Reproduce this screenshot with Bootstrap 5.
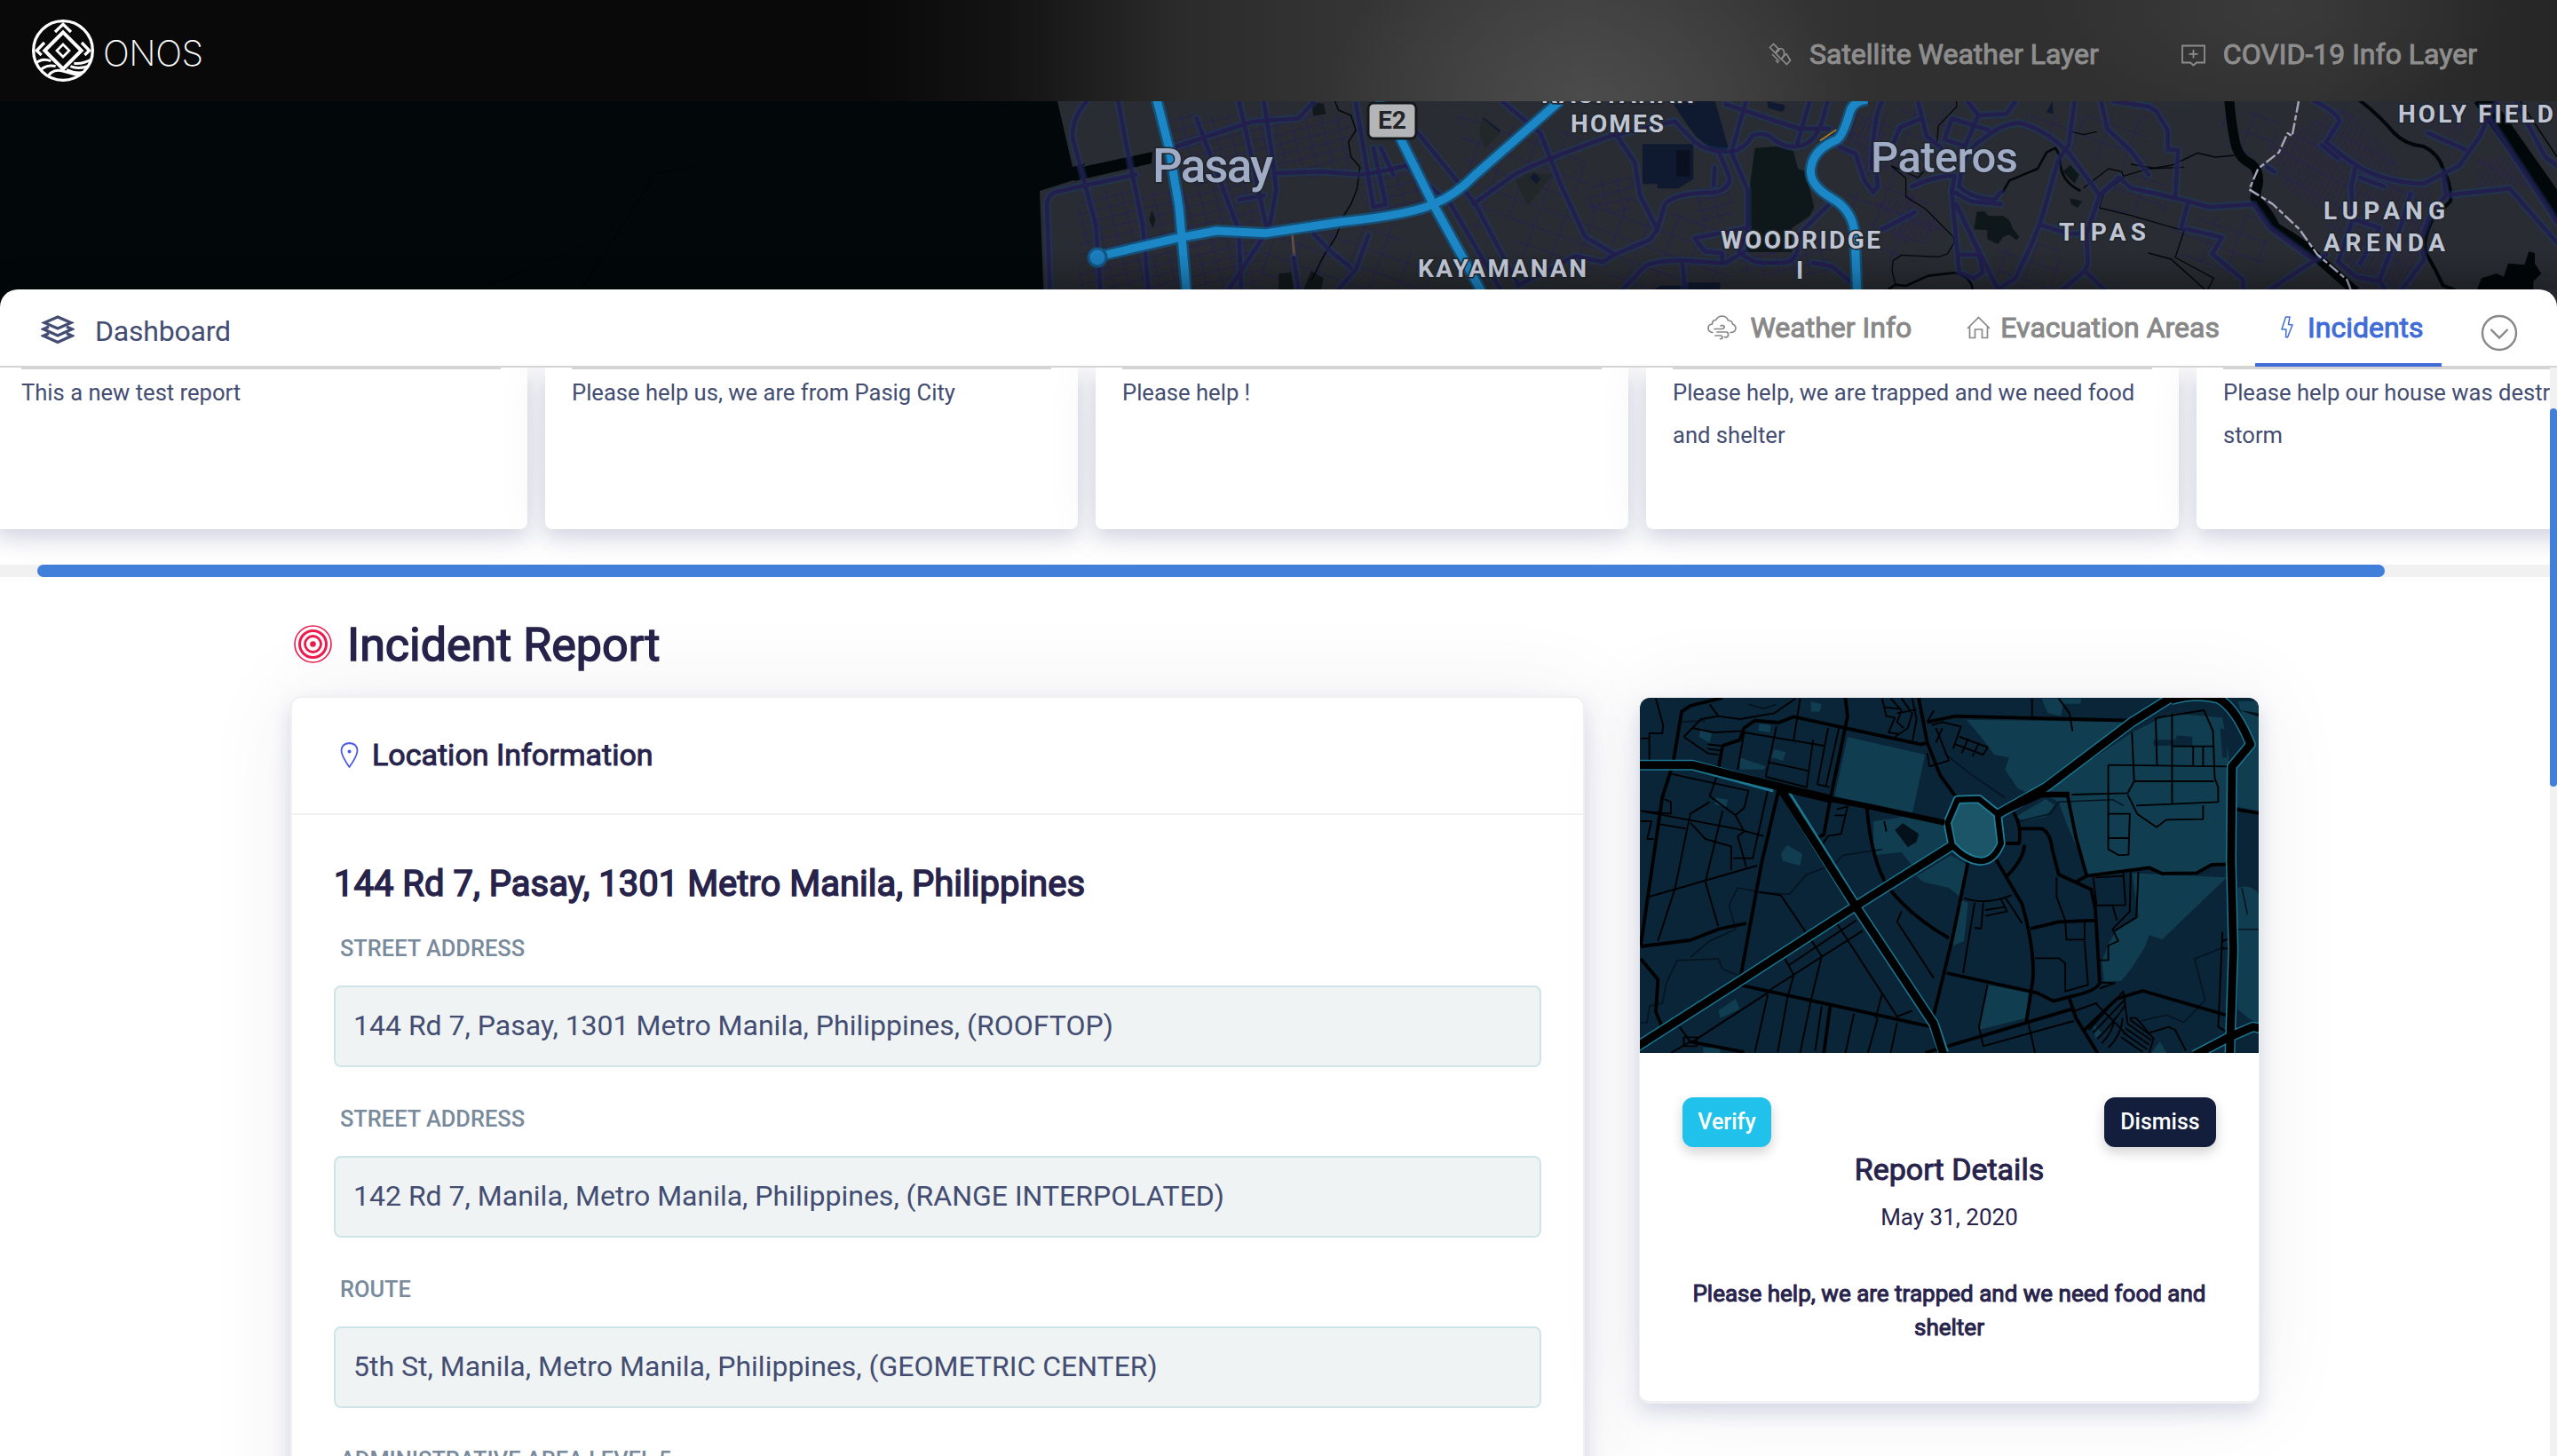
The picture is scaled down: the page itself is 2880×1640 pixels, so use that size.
<!DOCTYPE html>
<html lang="en">
<head>
<meta charset="utf-8">
<meta name="viewport" content="width=device-width, initial-scale=1">
<title>ONOS</title>
<link href="https://cdn.jsdelivr.net/npm/bootstrap@5.3.0/dist/css/bootstrap.min.css" rel="stylesheet">
<style>
  body{font-family:Roboto,"Liberation Sans",sans-serif;height:1640px;overflow:hidden;background:#fff;color:#434d72}
  .shell{height:1640px;overflow:hidden}
  .topbar{height:114px;padding:0 90px 0 36px;background:
    radial-gradient(ellipse 300px 190px at 1790px 114px,rgba(80,80,80,.75),rgba(80,80,80,0)),
    radial-gradient(ellipse 260px 130px at 2560px 10px,rgba(66,66,66,.6),rgba(66,66,66,0)),
    linear-gradient(90deg,#090909 0,#090909 970px,#141414 1140px,#2b2b2b 1330px,#363636 1560px,#3d3d3d 1780px,#303030 2120px,#303030 2600px,#262626 2880px)}
  .logo-word{font-family:Inter,"Liberation Sans",sans-serif;font-weight:200;color:#fff;font-size:39.500px;line-height:1;margin-left:10px;padding-top:7px;letter-spacing:-.4px}
  .faux{-webkit-text-stroke:1px currentColor}
  h1.faux,h3.faux{-webkit-text-stroke-width:1.500px}
  .toplink{color:#8d8d8d;font-size:32px;line-height:40px;padding:8px 0 0}
  .sat-ico{margin-top:7px}
  .covid-ico{margin:10px 0 0 93px}
  .maparea{height:232px;background:#02080a}
  .maparea svg,.reportmap svg{display:block}
  .art path{vector-effect:non-scaling-stroke;stroke-linejoin:round}
  .lbl{font-family:Roboto,sans-serif;font-weight:700;fill:#bfc4d3;font-size:28px;paint-order:stroke;stroke:#20242c;stroke-width:3px}
  .lbl-city{fill:#a0acc6;font-weight:500}
  .panel{height:1314px;margin-top:-20px;border-radius:20px 20px 0 0;background:#fff;box-shadow:0 0 36px rgba(0,0,0,.3);overflow:hidden}
  .tabbar{height:88px;border-bottom:2px solid #d4d4d4;padding:0 44px 0 46px}
  .tabtxt{font-size:32px;line-height:40px;color:#888}
  .dash-txt{margin:7px 0 0 23px;color:#434d72;letter-spacing:-.2px}
  .tabitem{height:88px}
  .tabitem.on{border-bottom:4px solid #416cd8;width:210px;padding-top:3px}
  .tabitem.on .tabtxt{color:#416cd8}
  .strip{height:222px;width:2872px;overflow:hidden;gap:20px;background:#fff}
  .strip-card{width:600px;height:182px;flex:none;background:#fff;border-radius:0 0 8px 8px;padding:0 30px;
    box-shadow:0 10px 22px rgba(50,60,130,.18),0 0 60px rgba(50,50,93,.08)}
  .strip-card:first-child{margin-left:-6px}
  .strip-card hr{margin:0;border:0;height:2px;opacity:1;background:#d4d4d4}
  .strip-card p{margin:0;padding-top:2px;font-size:25.600px;line-height:48px;color:#434d72}
  .htrack{height:14px;width:2872px;background:#f1f1f1;padding-left:42px}
  .hthumb{width:2644px;height:14px;border-radius:8px;background:#427fdb}
  .vtrack{position:absolute;right:0;top:414px;width:8px;height:1226px;background:#f1f1f1;padding-top:46px}
  .vthumb{height:426px;border-radius:4px;background:#427fdb}
  .content{padding:0 0 0 327px}
  .navy{color:#27234b}
  .pagehead{height:136px;padding-top:18px;padding-left:4px}
  .pagehead svg{margin-top:-4px}
  .pagehead h1{font-size:52px;line-height:60px;margin:0 0 0 17px;font-weight:400}
  .soft{border:2px solid #f1f1f3;border-radius:12px;background:#fff;box-shadow:0 10px 22px rgba(50,60,130,.17),0 0 100px rgba(50,50,93,.08)}
  .loc{width:1458px;height:1000px;margin-top:-2px}
  .loc-head{height:132px;border-bottom:2px solid #f2f2f2;padding:0 0 2px 54px}
  .loc-head h2{font-size:34px;margin:0 0 0 15px;font-weight:400;line-height:40px}
  .loc-body{padding:53px 47px 0 47px}
  .loc-body h3{font-size:40px;line-height:50px;margin:0 0 32px;font-weight:400}
  .fieldlab{font-size:25.400px;font-weight:500;line-height:30px;color:#788a9c;padding-left:7px;margin-bottom:27px;display:block}
  .fieldbox{height:92px;border:2px solid #cfe4e8;border-radius:8px;background:#eff3f4;color:#434d72;font-size:32px;padding:0 0 3px 20px;margin-bottom:43px}
  .rep{width:699px;height:795px;margin-left:61px;border-width:0 1px 3px;overflow:hidden}
  .reportmap{height:400px}
  .rep-body{padding:50px 48px 0}
  .pill{height:56px;border:0;border-radius:12px;color:#fff;font-size:25px;font-weight:500;padding:0;box-shadow:0 6px 14px rgba(0,0,0,.18)}
  .pill-v{width:100px;background:#20c1eb}.pill-d{width:126px;background:#131e3c}
  .rep h4{font-size:34px;line-height:40px;margin:5px 0 0;font-weight:400}
  .date{font-size:26px;line-height:40px;margin-top:14px}
  .msg{font-size:26px;line-height:38px;margin-top:47px}
</style>
</head>
<body>
<div class="shell position-relative">
  <header class="topbar d-flex align-items-center justify-content-between">
    <div class="d-flex align-items-center">
      <svg width="70" height="70" viewBox="108 2 210 210" fill="none" stroke="#fff">
        <clipPath id="disc"><circle cx="213" cy="107" r="98"/></clipPath>
        <circle cx="213" cy="107" r="100" stroke-width="10"/>
        <g clip-path="url(#disc)" stroke-width="9">
          <path d="M112 160Q135 128 172 142M125 186Q150 150 188 160M155 205Q175 165 212 176L262 190Q285 195 296 188M238 160Q265 172 305 158M225 172Q262 190 305 175M250 150Q280 154 312 135"/>
          <path d="M186 44L213 18L240 44" stroke-width="10"/><path d="M150 80L124 107L140 122M276 80L302 107L286 122" stroke-width="10"/>
        </g>
        <path d="M213 45L275 107L213 169L151 107Z" fill="#090909" stroke-width="12"/>
        <path d="M213 86L234 107L213 128L192 107Z" stroke-width="8"/>
      </svg>
      <span class="logo-word">ONOS</span>
    </div>
    <nav class="d-flex align-items-center">
      <svg class="sat-ico" width="26" height="26" viewBox="0 0 26 26" fill="none" stroke="#8d8d8d" stroke-width="1.600"><path d="M1.500 5.500L5.500 1.500L12 8L8 12Z M17 15.500L20 12.500L24.500 20L20.500 24.500L14.500 18.500Z"/><path d="M8 12Q9 7 14 6.500Q19 8 17 15L14 18.500L8 12M4 13L12 21M8 20L11 23"/></svg>
      <span class="toplink faux ms-3 ps-1">Satellite Weather Layer</span>
      <svg class="covid-ico" width="27" height="25" viewBox="0 0 27 25" fill="none" stroke="#8d8d8d" stroke-width="1.800"><path d="M1 1.500H26V20.500H17L13.500 23.500L10 20.500H1Z M13.500 6V15.500M8.500 10.800H18.500"/></svg>
      <span class="toplink faux ms-3 ps-1">COVID-19 Info Layer</span>
    </nav>
  </header>

  <div class="maparea">
    <svg class="art" width="2880" height="232" viewBox="0 114 2880 232">
      <defs>
        <pattern id="blk" width="17" height="11" patternUnits="userSpaceOnUse" patternTransform="rotate(-14)"><path d="M0 .5H17M.5 0V11" stroke="#26204f" stroke-width="1" fill="none"/></pattern>
        <pattern id="fine" width="6" height="24" patternUnits="userSpaceOnUse" patternTransform="rotate(28)"><path d="M0 .5H6M.5 0V24" stroke="#27214f" stroke-width="1" fill="none"/></pattern>
        <pattern id="wide" width="30" height="22" patternUnits="userSpaceOnUse" patternTransform="rotate(20)"><path d="M0 .5H30M.5 0V22" stroke="#26204f" stroke-width="1" fill="none"/></pattern>
        <linearGradient id="floor" x1="0" y1="0" x2="0" y2="1"><stop offset="0" stop-color="#000" stop-opacity="0"/><stop offset="1" stop-color="#000" stop-opacity=".15"/></linearGradient>
        <g id="roads" fill="none" stroke-linecap="round">
          <g transform="translate(1140 0) scale(.5612 .33333)">
            <path d="M150 342Q118 400 122 470L168 760L178 1000M213 342L228 480L262 760L275 1000M455 342L470 450L512 780L430 990M505 342L520 500L530 640L515 780M605 345L575 400L480 412L330 495M248 590L150 625L85 650Q68 665 70 700L76 1000M370 400L455 780L460 1000M455 675L505 660M530 585L620 580L700 590Q780 570 815 545"/>
            <path d="M690 350L715 600L725 700L750 690L725 500M740 500L765 590M815 450L930 690L1015 960M790 560L880 690L980 978M925 690L1000 600Q1020 570 1200 460L1330 410M985 345L1060 450L1100 620L1150 800L1210 860L1185 885L1130 865L1015 965M1210 450L1250 550L1260 660L1295 775L1280 810L1210 860M1295 775L1310 690Q1330 650 1410 650Q1440 640 1440 600L1420 520"/>
            <path d="M1330 410L1370 480Q1400 520 1450 510M1225 978L1270 900Q1290 880 1350 880L1430 890L1470 850M1345 880L1350 978M1370 805L1475 770M1370 805L1390 850L1425 855V890M715 795L690 910L655 978M605 790L640 850L680 905M565 870L575 978M1410 565L1408 625"/>
          </g>
          <g transform="translate(1900 30) scale(.33333)">
            <path d="M130 262L380 345H480M200 252L150 425L205 550V690L175 760Q220 800 260 798H330Q380 790 375 720L390 690L480 600M415 252L370 405M150 425Q200 410 220 370Q250 355 280 370Q320 410 370 405Q440 400 465 290L475 255M660 252Q630 300 625 480M515 405L570 430L600 520L630 560L645 540L640 490M780 252L795 310L720 340L695 400M795 310L810 370L860 410M950 255L985 300L1080 295L1110 252M895 310L1020 350M895 310L870 380L940 405L985 300M760 540Q850 500 905 505L895 555L960 590L1060 600"/>
            <path d="M920 540Q930 420 1000 380Q1060 330 1120 325Q1200 340 1285 420L1395 570M895 555L920 830L970 850L1000 830L985 760L910 600L1050 888M1310 252L1290 400L1255 450L1195 660L1160 745L1110 850L1050 888M1195 670L1290 700H1350M920 770H985M1395 570L1350 700L1355 800L1345 825L1270 888M1345 825L1410 888M1400 252L1420 345L1500 420L1560 500M1395 570L1460 510L1500 545L1560 560M1440 252L1560 270M660 685L770 628M425 798L490 810L550 860M920 540Q960 580 1040 585L1060 560"/>
          </g>
          <g transform="translate(2420 30) scale(.33333)">
            <path d="M0 270L25 285L65 350V415L100 418L90 580M0 558L135 590L205 610L355 600L410 680L560 790M135 590L110 680L248 712L215 768L320 855V888M410 888L570 785L600 770M560 252Q640 290 645 320L600 390L660 440L720 480Q820 530 930 530L1050 470L1120 370L1150 300L1180 252M945 360L1070 415M585 400L640 445M700 470L685 540L690 650L640 795L700 845L780 860L800 888M715 510L795 540M885 565L850 680L780 855M995 490L1005 570L1220 547L1345 690L1380 730M1005 570L950 640L920 720L930 790L855 888M400 475L425 490M690 650L780 680L715 800M1145 300L1380 660M1240 252L1340 440L1380 470"/>
          </g>
        </g>
        <g id="hiways" fill="none">
          <path transform="translate(1140 0) scale(.5612 .33333)" d="M290 335L315 500L335 700L350 985M170 868L330 805L410 780L510 788L660 750Q800 725 845 690Q890 660 930 590L1100 340M735 335L780 470L845 690L942 985"/>
          <path transform="translate(1900 30) scale(.33333)" d="M610 246Q560 252 550 290Q525 380 500 385Q420 420 418 490Q420 540 490 580Q560 620 567 700L575 896"/>
        </g>
      </defs>
      <path d="M1191 114H2880V346H1176L1171 215L1212 202L1222 184L1208 188Z" fill="#292d33"/>
      <path d="M1210 190L1298 171L1297 184L1210 204Z" fill="#02080a"/>
      <path d="M540 326L658 276L738 196L780 188M738 196L655 326" fill="none" stroke="#020303" stroke-width="1"/>
      <path d="M1215 215H1420V326H1215ZM1310 130H1520V200H1310ZM1330 200H1420V250Z" fill="url(#blk)"/>
      <path d="M1420 250L1560 240L1620 326H1420ZM1640 130L1780 150L1790 210L1660 260ZM1700 240L1860 220L1850 300L1710 310ZM1850 240H1950V326H1800Z" fill="url(#wide)"/>
      <path d="M1530 200L1600 190L1620 240L1540 250ZM1790 200H1840V240H1790ZM1960 260H2060V310H1960ZM1910 210L1950 200V250H1910Z" fill="url(#blk)"/>
      <path d="M2060 130L2200 120L2210 190L2150 215L2070 170ZM2060 230L2150 190L2195 260L2120 300L2100 240ZM2240 130H2420V200L2330 170ZM2250 280L2320 270V326H2250ZM2380 200L2440 190V240H2380Z" fill="url(#wide)"/>
      <path d="M2440 250L2540 240L2560 290L2520 310L2460 290ZM2500 130L2570 120L2560 170L2510 180Z" fill="url(#wide)"/>
      <path d="M2560 160L2640 120L2700 180L2700 230L2620 240L2570 210ZM2640 180L2740 210L2720 326H2660L2620 250ZM2700 120H2780L2770 160ZM2790 180L2850 170V210H2790Z" fill="url(#fine)"/>
      <path d="M2080 150L2110 126L2140 180L2100 200ZM2110 230L2150 218L2190 256L2140 276Z" fill="url(#fine)"/>
      <g transform="translate(1140 0) scale(.5612 .33333)">
        <path d="M1265 487H1367V605L1337 637H1295V622H1265Z" fill="#0f1930"/><path d="M1333 508H1360V596H1333Z" fill="#0a1020"/>
        <path d="M1515 345L1550 355L1545 378L1518 365ZM945 395L980 440L975 455L940 430ZM1300 965H1420V978H1290Z" fill="#0f1930"/>
        <path d="M600 345L625 350L630 385L605 392ZM535 925L560 920L565 978H535ZM600 915L625 940L620 978H585ZM280 710L288 740L283 770L275 745Z" fill="#12181c"/>
        <path d="M945 400Q930 440 950 500L980 450ZM1010 610L1040 585L1085 590L1035 695Z" fill="#22272a"/>
        <path d="M1040 600L1048 582L1060 605L1052 622Z" fill="#0f1930"/>
        <path d="M648 342L655 372L680 390L690 440L675 480L680 530L698 565L692 640L680 690L665 730L650 800L625 865L600 950" fill="none" stroke="#05080a" stroke-width="1.500"/>
        <path d="M563 790L568 868M561 790L565 868" fill="none" stroke="#7a5a4c" stroke-width="1"/>
      </g>
      <g transform="translate(1900 30) scale(.33333)">
        <path d="M230 410L305 405L360 420L375 480L400 488L430 610L415 640L355 680V762H200L210 560ZM980 625L1005 625L1020 640H1070L1090 655L1100 680L1123 710L1113 722L1090 703L1070 710L1050 735L1015 718V688L970 685ZM1270 490L1295 468L1325 500L1310 530ZM1295 580L1335 590L1320 612L1298 600Z" fill="#0e1719"/>
        <path d="M-60 240L95 252L140 410L100 430L30 370L0 330ZM275 252L332 268L328 284L275 268ZM1215 290L1235 252L1238 295ZM0 865H112V888H0Z" fill="#0f1930"/>
        <path d="M910 252L912 270L850 335L845 390M690 470L740 512V575L805 615L900 710L903 730L880 768L850 778L725 772L697 790L693 825L705 872M690 470L780 510L800 490M1340 545L1425 480L1470 490L1475 510L1410 560L1393 612L1500 638L1680 690L1650 780L1780 850L1760 888M1300 355L1340 365L1385 355M1475 505L1560 480L1680 475" fill="none" stroke="#05080a" stroke-width="1.300"/>
        <path d="M680 888L705 872L740 876L815 842L905 832Q960 845 965 888M1065 562L1090 520L1185 480L1215 425L1245 410L1262 440Q1255 520 1330 555" fill="none" stroke="#04080a" stroke-width="2.600"/>
      </g>
      <g transform="translate(2420 30) scale(.33333)" fill="none" stroke="#02070a">
        <path d="M272 246Q280 330 290 380Q300 440 340 460Q375 480 370 530L360 580Q400 620 430 680Q520 730 570 780L700 896" stroke-width="11"/>
        <path d="M712 248Q780 300 830 360Q870 400 930 405Q980 430 995 480Q1025 540 1020 590L960 650Q920 730 940 770Q970 820 995 875L1035 890" stroke-width="4"/>
        <path d="M1125 240L1420 660" stroke-width="20"/>
        <path d="M1255 252L1380 440M-60 465L20 478L80 468L165 427L225 441L290 435M0 765L75 785L190 888" stroke-width="1.500"/>
        <path d="M1110 888L1125 850L1175 835L1200 845L1215 800L1270 805L1285 760L1305 765V800L1327 835L1300 860V888Z" fill="#02070a" stroke="none"/>
      </g>
      <use href="#roads" stroke="#16407c" stroke-opacity=".34" stroke-width="9"/>
      <use href="#roads" stroke="#231d4e" stroke-opacity=".9" stroke-width="4.500"/>
      <path transform="translate(2420 30) scale(.33333)" d="M507 252L485 370L470 360L440 425L370 480L340 550L420 600L510 685L570 770L670 855L683 888" fill="none" stroke="#aaa5bd" stroke-width="2.400" stroke-dasharray="13 3 6 3"/>
      <path transform="translate(1900 30) scale(.33333)" d="M505 348L450 385" fill="none" stroke="#d08a2a" stroke-width="1.500"/>
      <use href="#hiways" stroke="#135682" stroke-width="14" stroke-opacity=".8"/>
      <use href="#hiways" stroke="#1c87c6" stroke-width="9"/>
      <circle cx="1236" cy="290" r="10" fill="#1c7fc0" stroke="#135682" stroke-width="3"/>
      <rect y="280" width="2880" height="46" fill="url(#floor)"/>
      <rect x="1541" y="116" width="54" height="40" rx="6" fill="#b4b5b7" stroke="#17181c" stroke-width="3"/>
      <text class="lbl" x="1552" y="145" style="fill:#222428;stroke:none;font-size:28px" textLength="32" lengthAdjust="spacingAndGlyphs">E2</text>
      <text class="lbl lbl-city" x="1298" y="205" style="font-size:53px" textLength="136">Pasay</text>
      <text class="lbl lbl-city" x="2107" y="194" style="font-size:49px" textLength="166">Pateros</text>
      <text class="lbl" x="1736" y="116" textLength="172">KASIYAHAN</text>
      <text class="lbl" x="1769" y="149" textLength="105">HOMES</text>
      <text class="lbl" x="1597" y="312" textLength="190">KAYAMANAN</text>
      <text class="lbl" x="1938" y="280" textLength="180">WOODRIDGE</text>
      <text class="lbl" x="2023" y="314">I</text>
      <text class="lbl" x="2319" y="271" textLength="98">TIPAS</text>
      <text class="lbl" x="2701" y="138" textLength="175">HOLY FIELD</text>
      <text class="lbl" x="2617" y="247" textLength="137">LUPANG</text>
      <text class="lbl" x="2617" y="283" textLength="137">ARENDA</text>
    </svg>
  </div>

  <section class="panel position-relative">
    <div class="tabbar d-flex align-items-center justify-content-between">
      <div class="d-flex align-items-center">
        <svg class="mt-1" width="38" height="34" viewBox="0 0 38 34" fill="none" stroke="#434d72" stroke-width="3.400" stroke-linejoin="miter"><path d="M19 3L34 9.500L19 16L4 9.500Z"/><path d="M9 14L3 16.800L19 24L35 16.800L29 14M9 21.500L3 24.300L19 31.500L35 24.300L29 21.500"/></svg>
        <span class="tabtxt dash-txt">Dashboard</span>
      </div>
      <div class="d-flex align-items-center">
        <div class="tabitem d-flex align-items-center">
          <svg width="33" height="28" viewBox="0 0 33 28" fill="none" stroke="#888" stroke-width="1.700" stroke-linecap="round"><path d="M6 19.500Q1 19 1 14.500Q1 10.500 5.500 10Q5.500 5.500 9.500 5.500Q12 1 17 1Q22 1.500 23.500 6Q28 6 28.500 10Q32 11.500 32 15Q31.500 19.500 26 19.500"/><path d="M8 15.500H17Q19.500 15 19 12.500Q17.500 10.500 15 12M11 19H22Q24 20 23.500 23Q22 26 19.500 24.500M9 23H15Q17.500 23.500 17 26Q16 27 14.500 26.500"/></svg>
          <span class="tabtxt faux" style="margin-left:15px">Weather Info</span>
        </div>
        <div class="tabitem d-flex align-items-center" style="margin-left:62px">
          <svg width="27" height="26" viewBox="0 0 27 26" fill="none" stroke="#888" stroke-width="1.700"><path d="M1 14L13.500 1.500L26 14M3.500 12V24.500H9.500V15H17.500V24.500H23.500V12"/></svg>
          <span class="tabtxt faux" style="margin-left:11px">Evacuation Areas</span>
        </div>
        <div class="tabitem on d-flex align-items-center" style="margin-left:40px;padding-left:29px">
          <svg width="14" height="25" viewBox="0 0 14 25" fill="none" stroke="#416cd8" stroke-width="1.500" stroke-linejoin="round"><path d="M5.500 1H10L8.500 9.500L13 10L7.500 24L5.500 23.500L6 15H1Z"/></svg>
          <span class="tabtxt faux" style="margin-left:16px">Incidents</span>
        </div>
        <svg style="margin:11px 0 0 44px" width="42" height="42" viewBox="0 0 42 42" fill="none" stroke="#888" stroke-width="2.400"><circle cx="21" cy="21" r="19"/><path d="M11.500 17L21 26.500L30.500 17"/></svg>
      </div>
    </div>

    <div class="strip d-flex">
      <div class="strip-card"><hr><p>This a new test report</p></div>
      <div class="strip-card"><hr><p>Please help us, we are from Pasig City</p></div>
      <div class="strip-card"><hr><p>Please help !</p></div>
      <div class="strip-card"><hr><p>Please help, we are trapped and we need food and shelter</p></div>
      <div class="strip-card"><hr><p>Please help our house was destroyed by the storm</p></div>
    </div>
    <div class="htrack"><div class="hthumb"></div></div>

    <main class="content">
      <div class="pagehead d-flex align-items-center">
        <svg width="43" height="43" viewBox="0 0 43 43" fill="none" stroke="#ee1c4e"><circle cx="21.500" cy="21.500" r="20.500" stroke-width="1.600"/><circle cx="21.500" cy="21.500" r="15" stroke-width="3"/><circle cx="21.500" cy="21.500" r="9" stroke-width="2.800"/><circle cx="21.500" cy="21.500" r="3.300" fill="#ee1c4e" stroke="none"/></svg>
        <h1 class="navy faux">Incident Report</h1>
      </div>
      <div class="d-flex align-items-start">
        <div class="loc soft">
          <div class="loc-head d-flex align-items-center">
            <svg width="21" height="29" viewBox="0 0 21 29" fill="none" stroke="#4a5ae8" stroke-width="1.800" stroke-linejoin="round"><path d="M10.500 1Q19.500 1.500 19.500 10Q19 16 10.500 28Q2 16 1.500 10Q1.500 1.500 10.500 1Z"/><circle cx="10.500" cy="10.500" r="2" fill="#4a5ae8" stroke="none"/></svg>
            <h2 class="navy faux">Location Information</h2>
          </div>
          <div class="loc-body">
            <h3 class="navy faux">144 Rd 7, Pasay, 1301 Metro Manila, Philippines</h3>
            <span class="fieldlab">STREET ADDRESS</span>
            <div class="fieldbox d-flex align-items-center">144 Rd 7, Pasay, 1301 Metro Manila, Philippines, (ROOFTOP)</div>
            <span class="fieldlab">STREET ADDRESS</span>
            <div class="fieldbox d-flex align-items-center">142 Rd 7, Manila, Metro Manila, Philippines, (RANGE INTERPOLATED)</div>
            <span class="fieldlab">ROUTE</span>
            <div class="fieldbox d-flex align-items-center">5th St, Manila, Metro Manila, Philippines, (GEOMETRIC CENTER)</div>
            <span class="fieldlab">ADMINISTRATIVE AREA LEVEL 5</span>
          </div>
        </div>

        <div class="rep soft">
          <div class="reportmap">
            <svg class="art" width="697" height="400" viewBox="58 48 1436 1200" preserveAspectRatio="none" fill="none">
              <path d="M58 48H1494V1248H58Z" fill="#0a2438"/>
              <g fill="#103d4f">
                <path d="M540 180L720 240L690 440L510 380ZM815 122L1190 130L960 370L935 355L905 290L915 250L880 240L850 180ZM1200 165L1290 100L1410 115L1425 250V610L1380 612L1350 642L1305 648L1270 640L1240 622L1100 650L1080 580L1050 480L1030 400L990 370Z"/>
                <path d="M1445 60H1494V430L1440 415V280L1478 200ZM1200 640L1420 655L1270 865L1240 850L1230 890L1200 960L1175 1005H1135L1130 940L1145 880L1165 830L1215 790ZM1445 690Q1475 675 1494 710V1150L1470 1130L1445 1100ZM600 465L650 455L680 445L760 475L775 520L760 560L690 615L665 570L600 580ZM700 650L780 580L815 610L800 720L775 690L715 670ZM865 1018L960 1045L955 1130L845 1170Z"/>
                <path d="M385 575L400 545L435 575L430 615L390 600ZM240 1105L280 1065L290 1100L245 1130ZM455 60L480 70L475 95H455ZM335 135L362 140L360 165L333 160ZM370 222L397 232L390 260L363 250ZM235 385L262 392L258 418L232 408ZM990 50H1083L1080 68H1040L1035 110L1005 100ZM290 250L350 280L345 290H290ZM930 450L1000 390L1020 410L1000 450L950 465ZM800 730L820 740L810 870L785 885ZM200 150L225 170L220 200L195 180ZM205 1230H245V1248H205ZM1265 1210L1280 1248H1245ZM1110 1150L1130 1180L1115 1200Z"/>
              </g>
              <path d="M1250 190H1300L1305 175L1340 180V210H1250ZM1405 150L1420 160V250H1410Z" fill="#0a2438"/>
              <path d="M668 472L705 508L700 535L680 553L650 495ZM1450 90L1494 100V112Z" fill="#04101a"/>
              <g stroke="#05131f" stroke-width="1.500">
                <path d="M60 1145L75 1145L80 1090L110 1080L120 1010L145 935L240 930L250 965L285 985M175 925L220 870L280 830L265 750L285 690L340 705L405 712L445 645L510 610L530 580L620 560M765 235L820 300Q860 340 905 385M1415 890L1345 930L1370 1070L1320 1145L1280 1120L1220 1140M1440 830H1494M1455 690L1468 780M940 465L1010 440L1030 400L1155 392L1180 412M310 70L345 85L375 70M155 130L210 125"/>
              </g>
              <g stroke="#000" stroke-width="1.900">
                <path d="M1145 275L1420 280M1200 165L1205 330H1390M1293 100V408M1255 115L1258 275M1258 115L1367 90L1388 160L1392 320L1400 350V400L1210 412M1205 330L1190 370L1060 375M1145 275V560L1170 580L1192 578L1195 440H1145M1293 212H1390M1342 212V278M1365 212V278M1190 375L1212 440L1257 485L1280 460L1365 458V412M1145 522H1192"/>
                <path d="M300 165L485 210M375 145L350 315M430 50L415 190M495 150L470 340L498 350M520 150L490 345M355 265L450 295M350 315L445 350L460 190M300 165L285 290M130 305L310 362L300 420L280 445M60 430L280 490L345 515M105 475L165 490M240 300L220 380L280 445L300 500L285 515M220 400L175 440L140 690L100 870M250 430L210 670L240 820M80 720L330 615M175 470L210 525L270 550V630M355 360L320 590H275M285 515L305 620M95 50L112 140L110 168H80V260M60 185H80M220 70L240 110L290 120L370 100L420 50M160 180L200 120L240 110M160 180L215 235L240 240M180 150L230 165L295 160M60 465H85L75 525H90M115 390L130 400V440L60 430M215 205L245 210M215 220L245 226"/>
                <path d="M515 425L540 415L525 508L495 515L480 545M510 445H535M335 705L385 715L480 920L455 1070L430 1248M515 810L655 1125L690 1105M560 800L405 950M575 835L360 1035M395 930L415 985L400 1065L378 1245M180 1210L360 1040M355 1050L325 1245M480 1090L465 1240M555 1115L535 1248M610 1130L587 1248M655 1145L640 1248M150 1160L175 1210L130 1248M620 1050L605 1130M665 770L655 805L740 995M160 1195H190V1225H160ZM625 465L630 500"/>
                <path d="M810 725Q860 750 920 715M835 740L808 978M855 740L850 828L835 825M860 765L905 755M860 785L910 770L895 725M905 720L945 810M1025 655V720L1045 800L1048 865H1090V805M975 928H1030L1045 945V1040L1098 1018L1090 870M1110 655L1118 750L1185 748L1180 640M1115 655L1180 650M1215 635L1210 790L1160 835M1197 635L1195 770L1155 830L1168 870L1145 885V935H1125M960 1150L975 1248M865 1018L845 1160L855 1225L1065 1140M1410 840L1400 1160L1430 1185M1410 870L1430 860M1410 895H1425M1125 1030L1160 1012L1125 1010M1155 750L1165 800"/>
                <path d="M620 50L630 110L650 115L635 165L660 170M640 50L665 90L655 130L670 150M665 50L690 100L680 150L650 180M690 50L700 120L690 200M625 80L660 85M655 100L700 88M735 140L760 130L803 145L785 220M800 180L865 215L855 240L790 205M820 185L805 235M845 200L830 245M745 150L775 260L730 280L725 235M968 50V110M1030 50L1055 100L1062 160M740 90L725 130M760 150L745 200"/>
                <path d="M1100 1170L1180 1040L1190 1150M1110 1180L1185 1065M1120 1200Q1155 1150 1185 1085M1130 1215Q1155 1180 1160 1130M1145 1230Q1175 1190 1178 1130M1115 1080L1150 1130L1190 1190M1120 1078L1060 1110M1210 1130L1250 1200L1240 1248M1195 1135L1245 1190M1190 1150L1245 1205M1185 1165L1240 1220M1180 1180L1235 1235M1175 1195L1225 1245M1240 1180L1285 1160L1300 1170L1325 1240M1195 1130H1212"/>
              </g>
              <g stroke="#000" stroke-width="3.800">
                <path d="M705 48L725 200L755 310L795 390M250 48L175 75L155 95L135 270L110 385L60 885M535 48L540 110L500 390L485 510L468 522M240 290L250 210L290 190L300 150L325 125L380 132L415 112L540 152L710 205L725 200M725 130L790 110L1200 125M60 888L175 867L240 830L305 810M60 930L100 1000L95 1110L110 1160M380 360L340 610L290 1005"/>
                <path d="M585 420Q595 600 635 690Q690 790 775 860M820 600L785 850L735 1150M885 595L945 745Q975 900 970 1000L955 1140M925 435Q945 480 938 540H900M940 490H990Q1010 500 1015 560L1030 645L1105 695L1115 760L1125 1010Q1120 1040 1050 1060L1018 1073L980 1045L770 978M1050 375L1070 520L1095 650L1070 670M1095 650L1240 622L1270 642L1350 640L1385 612L1430 610M965 828L1030 805L1115 800M950 545Q950 590 910 650M290 1018L500 1085L735 1160M500 1085L485 1248M720 1248L1060 1100M1055 1065L1070 1130L1120 1248M1090 1170L1165 1065L1225 1038L1430 1125M1440 425L1494 438M175 1210L300 1245"/>
              </g>
              <path d="M795 392L845 390L888 440L896 540Q880 598 850 600Q815 598 782 545L772 470Z" fill="#1c5568" stroke="#1f7f99" stroke-width="10"/>
              <g stroke="#1b7690" stroke-width="12"><path d="M58 275H180L370 350M395 370L560 755L740 1150L763 1248M50 1228L290 1005L555 755L785 545M890 440L1000 350L1200 130L1290 48M1290 55Q1350 30 1400 50Q1440 80 1475 205L1432 280L1430 600L1435 900L1427 1248M1345 1256L1425 1195L1480 1160L1500 1165"/></g>
              <g stroke="#000" stroke-width="9"><path d="M50 275H180L385 350L500 390M380 345L560 755L740 1150L763 1256M50 1228L290 1005L555 755L785 545M890 440L1000 350L1200 130L1290 48M1290 55Q1350 30 1400 50Q1440 80 1475 205L1432 280L1430 600L1435 900L1427 1256M1345 1256L1425 1195L1480 1160L1500 1165"/></g>
              <path d="M500 390L590 415L765 470M890 440L990 375H1055" stroke="#000" stroke-width="6.500"/>
              <path d="M795 392L845 390L888 440L896 540Q880 598 850 600Q815 598 782 545L772 470Z" stroke="#000" stroke-width="6.500"/>
            </svg>
          </div>
          <div class="rep-body text-center navy">
            <div class="d-flex justify-content-between">
              <button class="pill pill-v">Verify</button>
              <button class="pill pill-d">Dismiss</button>
            </div>
            <h4 class="navy faux">Report Details</h4>
            <div class="date">May 31, 2020</div>
            <div class="msg faux">Please help, we are trapped and we need food and shelter</div>
          </div>
        </div>
      </div>
    </main>
  </section>
  <div class="vtrack"><div class="vthumb"></div></div>
</div>
<script src="https://cdn.jsdelivr.net/npm/bootstrap@5.3.0/dist/js/bootstrap.bundle.min.js"></script>
</body>
</html>
